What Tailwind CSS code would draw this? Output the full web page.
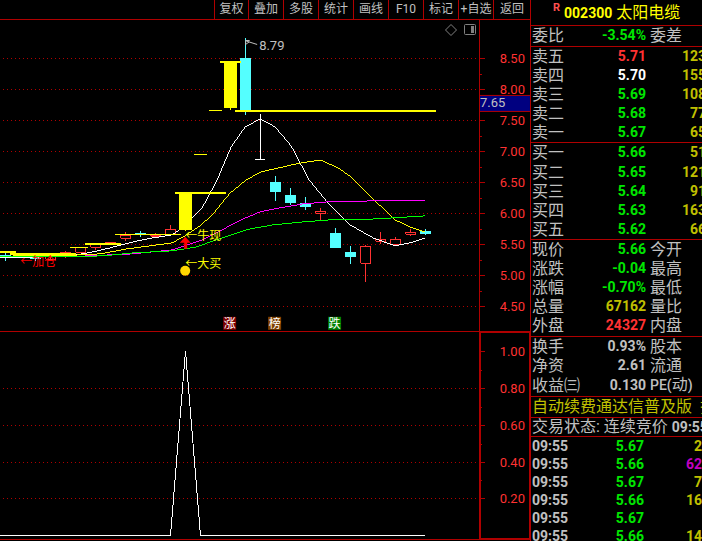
<!DOCTYPE html>
<html lang="zh-CN">
<head>
    <meta charset="UTF-8">
    <meta name="viewport" content="width=device-width, initial-scale=1.0">
    <title>002300 太阳电缆</title>
    <script src="https://cdn.jsdelivr.net/npm/@tailwindcss/browser@4"></script>
</head>
<body class="flex h-screen overflow-hidden bg-black font-['Roboto','Noto_Sans_CJK_SC',sans-serif] text-[#c0c0c0]">
    <!-- Charts -->
    <main class="flex min-w-0 flex-1 flex-col pb-px">
        <nav class="flex h-5 shrink-0 justify-end border-b border-[#b00000] text-xs leading-[19px]">
            <button class="w-[34px] border-l border-[#b00000] whitespace-nowrap">复权</button>
            <button class="w-[35px] border-l border-[#b00000] whitespace-nowrap">叠加</button>
            <button class="w-[35px] border-l border-[#b00000] whitespace-nowrap">多股</button>
            <button class="w-[35px] border-l border-[#b00000] whitespace-nowrap">统计</button>
            <button class="w-[35px] border-l border-[#b00000] whitespace-nowrap">画线</button>
            <button class="w-[35px] border-l border-[#b00000] whitespace-nowrap">F10</button>
            <button class="w-[35px] border-l border-[#b00000] whitespace-nowrap">标记</button>
            <button class="w-[35px] border-l border-[#b00000] whitespace-nowrap">+自选</button>
            <button class="w-[37px] border-l border-[#b00000] whitespace-nowrap">返回</button>
        </nav>

        <section class="flex min-h-0 flex-3 border-b border-[#b00000]">
            <div class="relative min-w-0 flex-1">
                <svg class="h-full w-full" viewBox="0 20 479 311" preserveAspectRatio="xMaxYMin meet" role="img" aria-label="K线图">
                    <!-- Price grid -->
                    <path d="M3 58.5H478M3 89.5H478M3 120.5H478M3 151.5H478M3 182.5H478M3 213.5H478M3 244.5H478M3 275.5H478M3 306.5H478" stroke="#b00000" stroke-dasharray="1 3" shape-rendering="crispEdges" />

                    <g fill="none" shape-rendering="crispEdges">
                        <!-- Rising candles -->
                        <g stroke="#ff3232">
                            <path d="M45.500 256.500h10v3h-10zM50.500 254v7M60.500 252.500h10v4h-10zM65.500 251v7M75.500 247.500h10v5h-10zM90.500 244.500h10v3h-10zM95.500 247v3M105 242.500h11M120.500 235.500h10v3h-10zM125.500 232v3M125.500 239v2M150.500 235.500h10v1h-10zM155.500 233v5M165.500 229.500h10v5h-10zM170.500 225v4" />
                            <path d="M315.500 211.500h10v2h-10zM320.500 208v3M320.500 214v6M360.500 246.500h10v17h-10zM365.500 245v1M365.500 264v18M375.500 239.500h10v2h-10zM380.500 232v7M380.500 242v2M390.500 239.500h10v5h-10zM395.500 237v2M405.500 232.500h10v2h-10zM410.500 229v3M410.500 235v1" />
                        </g>
                        <!-- Falling candles -->
                        <path d="M5.500 253v8M0 255.500h11M35.500 256v5M30 258.500h11M140.500 231v6M135 233.500h11M245.500 38v77M275.500 176v25M290.500 188v17M305.500 197v13M335.500 228v20M350.500 246v18M425.500 229v6" stroke="#54ffff" />
                        <path d="M240 58h11v52h-11zM270 182h11v10h-11zM285 195h11v8h-11zM300 203h11v4h-11zM330 233h11v15h-11zM345 252h11v5h-11zM420 231h11v3h-11z" fill="#54ffff" />
                    </g>

                    <!-- Moving averages -->
                    <g fill="none" shape-rendering="crispEdges">
                        <polyline stroke="#ffffff" points="0,258 28,258 76,255 93,252 110,248 133,242 153,238 172,235 179,230 192,218 202,208 217,180 231,147 245,127 260,119 275,127 291,146 309,180 327,202 350,225 373,238 395,246 410,243 425,238" />
                        <polyline stroke="#ffff00" points="13,256 60,256 100,254 127,249 150,246 172,243 185,236 200,226 213,214 230,193 240,185 246,180 261,172 296,164 320,160 338,168 351,177 373,199 395,220 410,227 425,232" />
                        <polyline stroke="#ff00ff" points="0,257 70,257 88,256 133,254 172,250 187,245 202,240 220,231 239,221 243,219 260,212 280,208 303,204 327,202 373,201 425,201" />
                        <polyline stroke="#00ff00" points="0,257 60,257 103,256 133,253 172,251 197,247 213,241 240,232 250,229 273,225 303,222 330,220 358,220 393,218 425,216" />
                    </g>

                    <!-- Signal bars and levels -->
                    <g fill="#ffff00" shape-rendering="crispEdges">
                        <path d="M0 251h16v2H0zM10 253h66v2H10zM70 247h18v1H70zM85 243h36v2H85zM115 234h66v1h-66z" />
                        <path d="M179 192h13v38h-13zM175 192h51v2h-51zM185 230h1v1h-1zM194 154h13v1h-13zM209 110h13v1h-13z" />
                        <path d="M224 61h13v47h-13zM220 61h21v2h-21zM230 108h1v2h-1zM235 110h201v2H235z" />
                    </g>
                    <path d="M260.500 114v45M255 159.500h10" stroke="#ffffff" shape-rendering="crispEdges" />

                    <!-- Signals -->
                    <path d="M185 237l5.500 6H187v6h-3v-6h-4.500z" fill="#ff0000" />
                    <circle cx="185" cy="271" r="5" fill="#ffd700" />
                    <text x="20" y="266" font-size="12" fill="#ff0000">←加仓</text>
                    <g font-size="12" fill="#ffff00">
                        <text x="185" y="240">←牛现</text>
                        <text x="185" y="268">←大买</text>
                    </g>

                    <path d="M245.500 45v-4.500h4M246 41l11 3.500M246 44l3-2" fill="none" stroke="#c0c0c0" />
                    <text x="259" y="50" font-size="13" fill="#c0c0c0">8.79</text>

                    <path d="M223 317h13v13h-13z" fill="#800000" />
                    <path d="M268 317h13v13h-13z" fill="#804000" />
                    <path d="M328 317h13v13h-13z" fill="#008000" />
                    <g font-size="12" fill="#ffffff" text-anchor="middle">
                        <text x="229.500" y="328">涨</text>
                        <text x="274.500" y="328">榜</text>
                        <text x="334.500" y="328">跌</text>
                    </g>
                </svg>
                <div class="absolute top-1 right-[3px] flex gap-[7px]">
                    <button aria-label="标记点">
                        <svg class="block" width="12" height="12" fill="none" stroke="#808080"><path d="M6 .5L11.500 6L6 11.500L.5 6z" /></svg>
                    </button>
                    <button aria-label="侧栏">
                        <svg class="block" width="12" height="12" fill="none" stroke="#808080"><rect x=".5" y=".5" width="11" height="10" rx="1" /><path d="M7 2h3v7H7z" fill="#808080" stroke="none" /></svg>
                    </button>
                </div>
            </div>
            <div class="w-[51px] shrink-0 border-l border-[#b00000]">
                <svg class="h-full w-full" viewBox="0 20 50 311" preserveAspectRatio="xMinYMin meet" role="img" aria-label="价格轴">
                    <path d="M0 58.5h5M0 89.5h5M0 120.5h5M0 151.5h5M0 182.5h5M0 213.5h5M0 244.5h5M0 275.5h5M0 306.5h5M0 74.5h2M0 105.5h2M0 136.5h2M0 167.5h2M0 198.5h2M0 229.5h2M0 260.5h2M0 291.5h2" stroke="#b00000" shape-rendering="crispEdges" />
                    <g font-size="13" fill="#ff3232" text-anchor="end">
                        <text x="45" y="63">8.50</text>
                        <text x="45" y="94">8.00</text>
                        <text x="45" y="125">7.50</text>
                        <text x="45" y="156">7.00</text>
                        <text x="45" y="187">6.50</text>
                        <text x="45" y="218">6.00</text>
                        <text x="45" y="249">5.50</text>
                        <text x="45" y="280">5.00</text>
                        <text x="45" y="311">4.50</text>
                    </g>
                    <path d="M0 95h50v17H0z" fill="#000080" />
                    <path d="M0 95.500h50M0 111.500h50" stroke="#b00000" />
                    <text x="0" y="107" font-size="13" fill="#c0c0c0">7.65</text>
                </svg>
            </div>
        </section>

        <section class="flex min-h-0 flex-2 border-b border-[#b00000]">
            <svg class="h-full min-w-0 flex-1" viewBox="0 332 479 207" preserveAspectRatio="xMaxYMin meet" role="img" aria-label="指标图">
                <path d="M3 388.500H478M3 425.500H478M3 462.500H478M3 498.500H478" stroke="#b00000" stroke-dasharray="1 3" shape-rendering="crispEdges" />
                <path d="M0 535.500H170.500L185.500 351L200.500 535.500H425" fill="none" stroke="#ffffff" shape-rendering="crispEdges" />
            </svg>
            <div class="w-[51px] shrink-0 border-y border-r border-l-2 border-[#b00000]">
                <svg class="h-full w-full" viewBox="0 333 48 205" preserveAspectRatio="xMinYMin meet" role="img" aria-label="指标轴">
                    <path d="M0 351.500h4M0 388.500h4M0 425.500h4M0 462.500h4M0 498.500h4M0 370.500h1M0 407.500h1M0 444.500h1M0 480.500h1" stroke="#b00000" shape-rendering="crispEdges" />
                    <g font-size="13" fill="#ff3232" text-anchor="end">
                        <text x="44" y="356">1.00</text>
                        <text x="44" y="393">0.80</text>
                        <text x="44" y="430">0.60</text>
                        <text x="44" y="467">0.40</text>
                        <text x="44" y="503">0.20</text>
                    </g>
                </svg>
            </div>
        </section>
    </main>

    <!-- Quote panel -->
    <aside class="w-43 shrink-0 overflow-hidden border-l border-[#b00000] whitespace-nowrap">
        <h1 class="flex h-[26px] items-center border-b border-[#b00000] pl-[22px] text-base leading-6 text-[#ffff00]">
            <span class="mr-1 self-start text-[11px] leading-4 font-bold text-[#ff5050]">R</span>
            <span class="mr-1 text-sm leading-6 font-bold">002300</span>
            <span>太阳电缆</span>
        </h1>

        <table class="w-[175px] table-fixed leading-[19px]">
            <colgroup><col class="w-[50px]"><col class="w-[65px]"><col class="w-[60px]"></colgroup>
            <tbody class="border-b border-[#b00000]">
                <tr class="h-5"><th class="p-0 pl-px text-left font-normal">委比</th><td class="p-0 text-right text-sm leading-[19px] font-bold text-[#00e600]">-3.54%</td><td class="p-0 pl-1">委差</td></tr>
            </tbody>
            <tbody class="border-b border-[#b00000]">
                <tr class="h-[19px]"><th class="p-0 pl-px text-left font-normal">卖五</th><td class="p-0 text-right text-sm leading-[19px] font-bold text-[#ff3232]">5.71</td><td class="p-0 text-right text-sm leading-[19px] font-bold text-[#c0c000]">123</td></tr>
                <tr class="h-[19px]"><th class="p-0 pl-px text-left font-normal">卖四</th><td class="p-0 text-right text-sm leading-[19px] font-bold text-white">5.70</td><td class="p-0 text-right text-sm leading-[19px] font-bold text-[#c0c000]">155</td></tr>
                <tr class="h-[19px]"><th class="p-0 pl-px text-left font-normal">卖三</th><td class="p-0 text-right text-sm leading-[19px] font-bold text-[#00e600]">5.69</td><td class="p-0 text-right text-sm leading-[19px] font-bold text-[#c0c000]">108</td></tr>
                <tr class="h-[19px]"><th class="p-0 pl-px text-left font-normal">卖二</th><td class="p-0 text-right text-sm leading-[19px] font-bold text-[#00e600]">5.68</td><td class="p-0 text-right text-sm leading-[19px] font-bold text-[#c0c000]">77</td></tr>
                <tr class="h-5"><th class="p-0 pl-px text-left font-normal">卖一</th><td class="p-0 text-right text-sm leading-[19px] font-bold text-[#00e600]">5.67</td><td class="p-0 text-right text-sm leading-[19px] font-bold text-[#c0c000]">65</td></tr>
            </tbody>
            <tbody class="border-b border-[#b00000]">
                <tr class="h-5"><th class="p-0 pl-px text-left font-normal">买一</th><td class="p-0 text-right text-sm leading-[19px] font-bold text-[#00e600]">5.66</td><td class="p-0 text-right text-sm leading-[19px] font-bold text-[#c0c000]">51</td></tr>
                <tr class="h-[19px]"><th class="p-0 pl-px text-left font-normal">买二</th><td class="p-0 text-right text-sm leading-[19px] font-bold text-[#00e600]">5.65</td><td class="p-0 text-right text-sm leading-[19px] font-bold text-[#c0c000]">121</td></tr>
                <tr class="h-[19px]"><th class="p-0 pl-px text-left font-normal">买三</th><td class="p-0 text-right text-sm leading-[19px] font-bold text-[#00e600]">5.64</td><td class="p-0 text-right text-sm leading-[19px] font-bold text-[#c0c000]">91</td></tr>
                <tr class="h-[19px]"><th class="p-0 pl-px text-left font-normal">买四</th><td class="p-0 text-right text-sm leading-[19px] font-bold text-[#00e600]">5.63</td><td class="p-0 text-right text-sm leading-[19px] font-bold text-[#c0c000]">163</td></tr>
                <tr class="h-5"><th class="p-0 pl-px text-left font-normal">买五</th><td class="p-0 text-right text-sm leading-[19px] font-bold text-[#00e600]">5.62</td><td class="p-0 text-right text-sm leading-[19px] font-bold text-[#c0c000]">66</td></tr>
            </tbody>
            <tbody class="border-b border-[#b00000]">
                <tr class="h-[19px]"><th class="p-0 pl-px text-left font-normal">现价</th><td class="p-0 text-right text-sm leading-[19px] font-bold text-[#00e600]">5.66</td><td class="p-0 pl-1">今开</td></tr>
                <tr class="h-[19px]"><th class="p-0 pl-px text-left font-normal">涨跌</th><td class="p-0 text-right text-sm leading-[19px] font-bold text-[#00e600]">-0.04</td><td class="p-0 pl-1">最高</td></tr>
                <tr class="h-[19px]"><th class="p-0 pl-px text-left font-normal">涨幅</th><td class="p-0 text-right text-sm leading-[19px] font-bold text-[#00e600]">-0.70%</td><td class="p-0 pl-1">最低</td></tr>
                <tr class="h-[19px]"><th class="p-0 pl-px text-left font-normal">总量</th><td class="p-0 text-right text-sm leading-[19px] font-bold text-[#c0c000]">67162</td><td class="p-0 pl-1">量比</td></tr>
                <tr class="h-5"><th class="p-0 pl-px text-left font-normal">外盘</th><td class="p-0 text-right text-sm leading-[19px] font-bold text-[#ff3232]">24327</td><td class="p-0 pl-1">内盘</td></tr>
            </tbody>
            <tbody>
                <tr class="h-5"><th class="p-0 pl-px text-left font-normal">换手</th><td class="p-0 text-right text-sm leading-[19px] font-bold">0.93%</td><td class="p-0 pl-1">股本</td></tr>
                <tr class="h-[19px]"><th class="p-0 pl-px text-left font-normal">净资</th><td class="p-0 text-right text-sm leading-[19px] font-bold">2.61</td><td class="p-0 pl-1">流通</td></tr>
                <tr class="h-[19px]"><th class="p-0 pl-px text-left font-normal">收益㈢</th><td class="p-0 text-right text-sm leading-[19px] font-bold">0.130</td><td class="p-0 pl-1"><span class="text-sm leading-[19px] font-medium">PE(</span>动<span class="text-sm leading-[19px] font-medium">)</span></td></tr>
            </tbody>
        </table>

        <p class="mt-px h-[22px] border-y border-[#b00000] pl-px leading-5 text-[#c0c000]">自动续费通达信普及版&nbsp; 扫</p>
        <p class="h-[19px] border-b border-[#b00000] pl-px leading-[18px]">交易状态: 连续竞价 <span class="text-sm leading-[18px] font-bold">09:55</span></p>

        <table class="w-full table-fixed text-sm leading-[18px] font-bold">
            <colgroup><col class="w-[50px]"><col class="w-[63px]"><col></colgroup>
            <tbody>
                <tr class="h-[18px]"><td class="p-0 pl-px">09:55</td><td class="p-0 text-right text-[#00e600]">5.67</td><td class="p-0 text-right text-[#c0c000]">2</td></tr>
                <tr class="h-[18px]"><td class="p-0 pl-px">09:55</td><td class="p-0 text-right text-[#00e600]">5.66</td><td class="p-0 text-right text-[#c000c0]">62</td></tr>
                <tr class="h-[18px]"><td class="p-0 pl-px">09:55</td><td class="p-0 text-right text-[#00e600]">5.67</td><td class="p-0 text-right text-[#c0c000]">7</td></tr>
                <tr class="h-[18px]"><td class="p-0 pl-px">09:55</td><td class="p-0 text-right text-[#00e600]">5.66</td><td class="p-0 text-right text-[#c0c000]">16</td></tr>
                <tr class="h-[18px]"><td class="p-0 pl-px">09:55</td><td class="p-0 text-right text-[#00e600]">5.67</td><td class="p-0"></td></tr>
                <tr class="h-[18px]"><td class="p-0 pl-px">09:55</td><td class="p-0 text-right text-[#00e600]">5.66</td><td class="p-0 text-right text-[#c0c000]">14</td></tr>
            </tbody>
        </table>
    </aside>
</body>
</html>
